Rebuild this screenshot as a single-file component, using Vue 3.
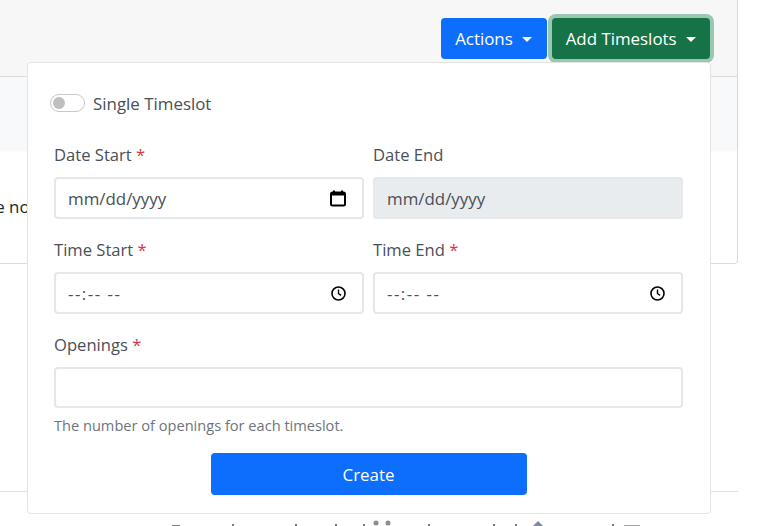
<template>
  <div class="page">
    <div class="card">
      <div class="card-header">
        <div class="btn-group">
          <button class="btn btn-primary actions-btn" type="button">Actions <span class="caret"></span></button>
          <button class="btn btn-success" type="button">Add Timeslots <span class="caret"></span></button>
        </div>
      </div>
      <div class="card-sub"></div>
      <div class="card-body">There are no timeslots</div>
    </div>

    <div class="footer-rule"></div>

    <!-- tops of the row below the fold -->
    <svg class="fold" width="760" height="6" viewBox="0 0 760 6">
      <path d="M172 5h8v1h-8zM232 4h2v2h-2zM295 4h2v2h-2zM335 4h2v2h-2zM363 4h2v2h-2zM428 4h2v2h-2zM493 4h2v2h-2zM515 4h2v2h-2zM612 4h2v2h-2z" fill="#7b7b7b" />
      <circle cx="376" cy="3" r="2.5" fill="#8d8d8d" />
      <circle cx="388" cy="3" r="2.5" fill="#8d8d8d" />
      <path d="M538 1l5 5h-10z" fill="#7c8a99" />
      <rect x="624" y="5" width="16" height="1" fill="#a5a5a5" />
    </svg>

    <form class="menu" @submit.prevent>
      <label class="switch-row">
        <span class="switch"><span class="knob"></span></span>
        Single Timeslot
      </label>

      <div class="fields">
        <div v-for="f in fields" :key="f.label" class="field">
          <div class="label">{{ f.label }} <span v-if="f.required" class="req">*</span></div>
          <div class="control" :class="{ disabled: f.disabled }">
            <span class="placeholder" :class="{ time: f.icon === 'clock' }">{{ f.placeholder }}</span>
            <svg v-if="f.icon === 'calendar'" class="picker" width="16" height="17" viewBox="0 0 16 17">
              <path d="M4 0.5v2M12 0.5v2" stroke="#000" stroke-width="2" fill="none" />
              <rect x="1" y="2.5" width="14" height="13" rx="1.5" stroke="#000" stroke-width="2" fill="none" />
              <rect x="1" y="2.5" width="14" height="3" fill="#000" />
            </svg>
            <svg v-if="f.icon === 'clock'" class="picker" width="15" height="15" viewBox="0 0 15 15">
              <circle cx="7.5" cy="7.5" r="6.5" stroke="#000" stroke-width="1.6" fill="none" />
              <path d="M7.5 3.6v4l2.6 1.8" stroke="#000" stroke-width="1.4" fill="none" />
            </svg>
          </div>
        </div>
        <div class="field wide">
          <div class="label">Openings <span class="req">*</span></div>
          <div class="control short"></div>
          <div class="hint">The number of openings for each timeslot.</div>
        </div>
      </div>

      <div class="actions">
        <button class="btn btn-primary create" type="submit">Create</button>
      </div>
    </form>
  </div>
</template>

<script setup>
const fields = [
  { label: "Date Start", required: true, placeholder: "mm/dd/yyyy", icon: "calendar" },
  { label: "Date End", placeholder: "mm/dd/yyyy", disabled: true },
  { label: "Time Start", required: true, placeholder: "--:-- --", icon: "clock" },
  { label: "Time End", required: true, placeholder: "--:-- --", icon: "clock" },
];
</script>

<style>
html,
body {
  margin: 0;
  background: #fff;
}
</style>

<style scoped>
.page {
  position: relative;
  width: 760px;
  height: 526px;
  overflow: hidden;
  font-family: "Open Sans", "Liberation Sans", sans-serif;
  font-size: 16.9px;
  color: #212529;
}

.card {
  width: 818px;
  height: 264px;
  margin-left: -80px;
  box-sizing: border-box;
  border: 1px solid #dcdcdc;
  border-top: 0;
  border-radius: 0 0 4px 0;
}

.card-header {
  height: 77px;
  display: flex;
  justify-content: flex-end;
  padding: 18px 27px 0 0;
  box-sizing: border-box;
  background: #f7f7f7;
  border-bottom: 1px solid #dcdcdc;
}

.card-sub {
  height: 71px;
  background: #f8f9fa;
  box-shadow: 0 2px 4px rgba(0, 0, 0, 0.05);
}

.card-body {
  padding: 47px 0 0 8px;
  white-space: nowrap;
}

.btn-group {
  display: flex;
  gap: 5px;
  height: 41px;
}

.btn {
  font: inherit;
  color: #fff;
  border: 0;
  border-radius: 4px;
  padding: 0 14px;
  white-space: nowrap;
}

.btn-primary {
  background: #0d6efd;
}

.actions-btn {
  padding: 0 14.5px;
}

.btn-success {
  background: #157347;
  box-shadow: 0 0 0 4px rgba(60, 153, 110, 0.5);
}

.caret {
  display: inline-block;
  width: 0;
  height: 0;
  margin-left: 5px;
  vertical-align: 3px;
  border-top: 5px solid #fff;
  border-left: 5px solid transparent;
  border-right: 5px solid transparent;
}

.footer-rule {
  width: 738px;
  margin-top: 227px;
  border-top: 1px solid #dee2e6;
}

.fold {
  display: block;
  margin-top: 28px;
}

.menu {
  position: absolute;
  top: 62px;
  left: 27px;
  width: 684px;
  height: 452px;
  box-sizing: border-box;
  padding: 28px 27px 0 26px;
  background: #fff;
  border: 1px solid #e4e4e4;
  border-radius: 4px;
}

.switch-row {
  display: flex;
  align-items: center;
  gap: 8px;
  height: 24px;
  margin-left: -4px;
  color: #495057;
}

.switch {
  display: block;
  width: 33px;
  height: 16px;
  border: 1px solid #c8c8c8;
  border-radius: 9px;
}

.knob {
  display: block;
  width: 12px;
  height: 12px;
  margin: 2px 0 0 2px;
  border-radius: 50%;
  background: #bfbfbf;
}

.fields {
  display: grid;
  grid-template-columns: 310px 310px;
  column-gap: 9px;
  row-gap: 19px;
  margin-top: 28px;
}

.wide {
  grid-column: 1 / 3;
}

.label {
  height: 24px;
  margin-bottom: 10px;
  font-size: 16.6px;
  color: #495057;
}

.req {
  color: #dc3545;
}

.control {
  display: flex;
  align-items: center;
  justify-content: space-between;
  height: 42px;
  box-sizing: border-box;
  padding: 0 16px 0 12px;
  background: #fff;
  border: 2px solid #e4e7eb;
  border-radius: 4px;
  color: #495057;
}

.control.short {
  height: 41px;
}

.control.disabled {
  background: #e9ecef;
}

.placeholder.time {
  letter-spacing: 1.5px;
}

.hint {
  margin-top: 8px;
  font-size: 14.6px;
  line-height: 19px;
  color: #6c757d;
}

.actions {
  display: flex;
  justify-content: center;
  margin-top: 18px;
}

.create {
  width: 316px;
  height: 42px;
}
</style>
